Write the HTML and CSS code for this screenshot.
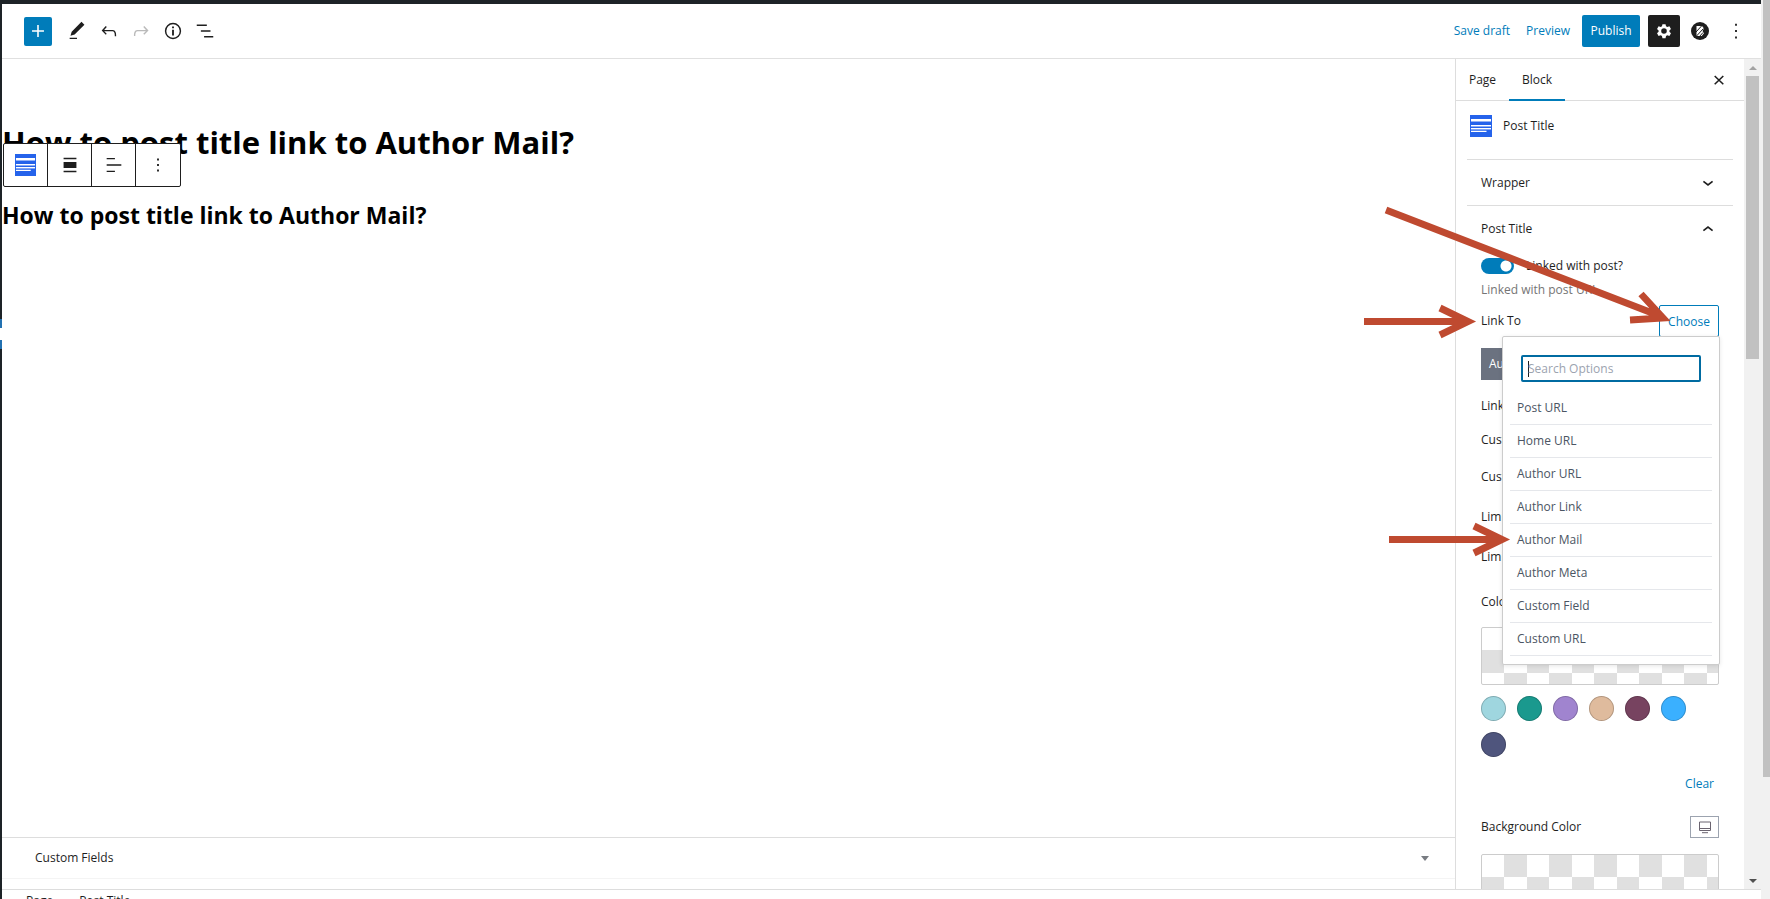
FILE: index.html
```
<!DOCTYPE html>
<html lang="en">
<head>
<meta charset="utf-8">
<title>Edit Page</title>
<link rel="stylesheet" href="styles.css">
</head>
<body>
<div class="screen">
  <div class="admin-menu"><span class="menu-current"></span></div>
  <div class="editor">
    <header class="toolbar">
      <div class="tools">
        <button class="tool insert" aria-label="Add block"><svg width="22" height="22" viewBox="0 0 24 24"><path d="M12 5.500v13M5.500 12h13" stroke="#fff" stroke-width="1.700"/></svg></button>
        <button class="tool" aria-label="Tools"><svg width="22" height="22" viewBox="0 0 24 24"><path d="M20.100 5.100L16.900 2 6.200 12.700l-1.300 4.400 4.500-1.300L20.100 5.100zM4 20.800h8v-1.500H4v1.500z" fill="#1e1e1e"/></svg></button>
        <button class="tool" aria-label="Undo"><svg width="22" height="22" viewBox="0 0 24 24"><path d="M18.300 11.700c-.6-.6-1.400-.9-2.300-.9H6.700l2.900-3.300-1.100-1-4.500 5L8.500 16l1-1-2.700-2.700H16c.5 0 .9.200 1.300.5 1 1 1 3.400 1 4.500v.3h1.500v-.2c0-1.500 0-4.300-1.500-5.700z" fill="#1e1e1e"/></svg></button>
        <button class="tool dim" aria-label="Redo"><svg width="22" height="22" viewBox="0 0 24 24"><path d="M15.600 6.500l-1.100 1 2.900 3.300H8c-.9 0-1.700.3-2.300.9-1.400 1.500-1.400 4.200-1.400 5.600v.2h1.500v-.3c0-1.100 0-3.500 1-4.500.3-.3.700-.5 1.300-.5h9.200L14.500 15l1.100 1.100 4.600-4.600-4.600-5z" fill="#1e1e1e"/></svg></button>
        <button class="tool" aria-label="Details"><svg width="22" height="22" viewBox="0 0 24 24"><circle cx="12" cy="12" r="8.100" fill="none" stroke="#1e1e1e" stroke-width="1.600"/><path d="M11 7h2v2h-2zM11 10.700h2V17h-2z" fill="#1e1e1e"/></svg></button>
        <button class="tool" aria-label="List view"><svg width="22" height="22" viewBox="0 0 24 24"><path d="M3 5h11v1.600H3zM7.500 11.300H18v1.500H7.500zM11 17.400h10V19H11z" fill="#1e1e1e"/></svg></button>
      </div>
      <div class="actions">
        <button class="text-link">Save draft</button>
        <button class="text-link preview">Preview</button>
        <button class="publish">Publish</button>
        <button class="settings" aria-label="Settings"><svg width="22" height="22" viewBox="0 0 24 24"><path fill="#fff" fill-rule="evenodd" d="M10.300 4.500h3.400l.5 2.300 1.400.8 2.300-.7 1.700 2.900-1.700 1.600v1.500l1.700 1.600-1.700 2.900-2.300-.7-1.400.8-.5 2.300h-3.400l-.5-2.300-1.400-.8-2.300.7-1.700-2.900 1.700-1.600v-1.500L4.400 9.800l1.700-2.900 2.300.7 1.400-.8zM12 9a3 3 0 100 6.100A3 3 0 0012 9z"/></svg></button>
        <button class="plugin" aria-label="Block library"><svg width="20" height="20" viewBox="0 0 20 20"><circle cx="10" cy="10" r="9" fill="#1e1e1e"/><path d="M6.500 5h5.500l2 2.500-1.500 2.500 1.500 2.300-2.300 2.700H6.500z" fill="#fff"/><path d="M6 11L12 4.500M6.500 15L13.500 7.500M9.500 15.500l3.500-4" stroke="#1e1e1e"/></svg></button>
        <button class="more" aria-label="Options"><svg width="22" height="22" viewBox="0 0 24 24"><path d="M11 4h2v2.200h-2zM11 11h2v2.200h-2zM11 18h2v2.200h-2z" fill="#1e1e1e"/></svg></button>
      </div>
    </header>

    <div class="work">
      <main class="content">
        <div class="canvas">
          <h1 class="page-title">How to post title link to Author Mail?</h1>
          <h2 class="block-title">How to post title link to Author Mail?</h2>
          <div class="block-tools">
            <button aria-label="Post Title"><svg width="21" height="22" viewBox="0 0 22 22" preserveAspectRatio="none"><path fill="#2563eb" d="M0 0h22v22H0z"/><path fill="#fff" d="M1 4h20v2.500H1zM1 10h20v1.300H1zM1 13h20v1H1zM1 15.700h15.500v1.300H1z"/><path fill="#9db9f7" d="M1 11.300h20v.7H1zM1 14h20v.7H1z"/></svg></button>
            <button aria-label="Align"><svg width="22" height="22" viewBox="0 0 24 24"><path d="M5 4h14v1.600H5zM5 8.700h14v6.600H5zM5 18.300h14v1.600H5z" fill="#1e1e1e"/></svg></button>
            <button aria-label="Text align"><svg width="22" height="22" viewBox="0 0 24 24"><path d="M4 4.300h9v1.500H4zM4 11.300h16v1.500H4zM4 18.200h9v1.500H4z" fill="#1e1e1e"/></svg></button>
            <button aria-label="Options"><svg width="22" height="22" viewBox="0 0 24 24"><path d="M11 5h2v2h-2zM11 11h2v2h-2zM11 17h2v2h-2z" fill="#1e1e1e"/></svg></button>
          </div>
        </div>
        <section class="metabox">
          <button class="metabox-head"><span>Custom Fields</span><span class="tri-down"></span></button>
        </section>
      </main>

      <aside class="sidebar">
        <div class="panel">
          <div class="tabs">
            <button class="tab">Page</button>
            <button class="tab active">Block</button>
            <button class="close" aria-label="Close settings"><svg width="22" height="22" viewBox="0 0 24 24"><path d="M7.300 7.600l9.400 9M16.700 7.600l-9.400 9" stroke="#1e1e1e" stroke-width="1.700"/></svg></button>
          </div>
          <div class="card">
            <svg width="22" height="22" viewBox="0 0 22 22"><path fill="#2563eb" d="M0 0h22v22H0z"/><path fill="#fff" d="M1 4h20v2.500H1zM1 10h20v1.300H1zM1 13h20v1H1zM1 15.700h15.500v1.300H1z"/><path fill="#9db9f7" d="M1 11.300h20v.7H1zM1 14h20v.7H1z"/></svg>
            <span>Post Title</span>
          </div>
          <button class="section"><span>Wrapper</span><svg width="22" height="22" viewBox="0 0 24 24"><path d="M7 10.300l5 3.900 5-3.900" fill="none" stroke="#1e1e1e" stroke-width="1.800"/></svg></button>
          <button class="section"><span>Post Title</span><svg width="22" height="22" viewBox="0 0 24 24"><path d="M7 13.700l5-3.900 5 3.900" fill="none" stroke="#1e1e1e" stroke-width="1.800"/></svg></button>

          <div class="fields">
            <label class="toggle-row"><input class="toggle" type="checkbox" checked><span>Linked with post?</span></label>
            <p class="help">Linked with post URL</p>
            <div class="link-row">
              <span>Link To</span>
              <div class="chooser">
                <button class="choose">Choose</button>
                <div class="menu">
                  <input class="search" type="text" placeholder="Search Options" aria-label="Search Options">
                  <ul class="options">
                    <li>Post URL</li>
                    <li>Home URL</li>
                    <li>Author URL</li>
                    <li>Author Link</li>
                    <li>Author Mail</li>
                    <li>Author Meta</li>
                    <li>Custom Field</li>
                    <li>Custom URL</li>
                  </ul>
                </div>
              </div>
            </div>
            <div class="chosen">Author Mail</div>
            <div class="row short">Link Target</div>
            <div class="row short">Custom Attributes</div>
            <div class="row">Custom Url</div>
            <div class="row">Limit By</div>
            <div class="row">Limit Count</div>
            <div class="row color-label">Color</div>
            <div class="checker"></div>
            <div class="swatches">
              <button class="swatch aqua" aria-label="Aqua"></button>
              <button class="swatch teal" aria-label="Teal"></button>
              <button class="swatch purple" aria-label="Purple"></button>
              <button class="swatch tan" aria-label="Tan"></button>
              <button class="swatch plum" aria-label="Plum"></button>
              <button class="swatch blue" aria-label="Blue"></button>
              <button class="swatch indigo" aria-label="Indigo"></button>
            </div>
            <button class="clear">Clear</button>
            <div class="bg-row">
              <span>Background Color</span>
              <button class="device" aria-label="Desktop"><svg width="14" height="13" viewBox="0 0 14 13"><path d="M1.500 1h11v8.500h-11zM1.500 7.500h11M4 11.700h6" fill="none" stroke="#6b6470"/></svg></button>
            </div>
            <div class="checker"></div>
          </div>
        </div>
        <div class="scrollbar">
          <span class="arrow-up"></span>
          <span class="thumb"></span>
          <span class="arrow-down"></span>
        </div>
      </aside>
    </div>
    <footer class="breadcrumb"><span>Page</span><span>→</span><span>Post Title</span></footer>
  </div>
  <div class="page-scroll"><span class="page-thumb"></span></div>
  <svg class="pointers" width="350" height="400" viewBox="1360 190 350 400" fill="none" stroke="#bf4a30" stroke-width="7">
    <path d="M1386 210L1660 316M1641 294L1663 318L1630 320"/>
    <path d="M1364 321.500H1468M1440 308L1468 321.500L1440 335"/>
    <path d="M1389 539.500H1502M1474 526L1502 539.500L1474 553"/>
  </svg>
</div>
</body>
</html>
```
FILE: styles.css
```
* { box-sizing: border-box; }
body {
  margin: 0;
  background: #fff;
  color: #1e1e1e;
  font: 12px/16px "Open Sans", "Noto Sans", sans-serif;
}
button {
  margin: 0;
  padding: 0;
  border: 0;
  background: none;
  color: inherit;
  font: inherit;
  cursor: pointer;
}
svg { display: block; flex: none; }

.screen {
  position: relative;
  display: flex;
  height: 100vh;
  overflow: hidden;
}
.admin-menu {
  width: 2px;
  padding-top: 319px;
  background: #1d2327;
}
.menu-current {
  display: block;
  height: 30px;
  background: linear-gradient(#2271b1 9px, #fff 9px 21px, #2271b1 21px);
}
.editor {
  flex: 1;
  min-width: 0;
  display: flex;
  flex-direction: column;
  border-top: 4px solid #1d2327;
}

.toolbar {
  flex: none;
  display: flex;
  align-items: center;
  justify-content: space-between;
  height: 55px;
  padding: 0 14px 0 22px;
  border-bottom: 1px solid #e0e0e0;
}
.tools { display: flex; gap: 4px; }
.tool {
  display: grid;
  place-items: center;
  width: 28px;
  height: 29px;
}
.insert { margin-right: 7px; background: #007cba; border-radius: 2px; }
.dim { opacity: .3; }
.actions { display: flex; align-items: center; }
.text-link { margin-right: 16px; color: #007cba; }
.text-link.preview { margin-right: 12px; }
.publish {
  width: 58px;
  height: 32px;
  border-radius: 2px;
  background: #007cba;
  color: #fff;
}
.settings {
  display: grid;
  place-items: center;
  width: 32px;
  height: 32px;
  margin: 0 10px 0 8px;
  border-radius: 2px;
  background: #1e1e1e;
}
.more { margin-left: 15px; }

.work { flex: 1; min-height: 0; display: flex; }
.content {
  flex: 1;
  min-width: 0;
  display: flex;
  flex-direction: column;
}
.canvas { position: relative; flex: 1; color: #000; }
.page-title {
  margin: 60px 0 0;
  font-size: 31px;
  line-height: 46px;
}
.block-title {
  margin: 32px 0 0;
  font-size: 23px;
  line-height: 36px;
}
.block-tools {
  position: absolute;
  left: 1px;
  top: 84px;
  display: flex;
  border: 1px solid #1e1e1e;
  border-radius: 2px;
  background: #fff;
}
.block-tools button {
  display: grid;
  place-items: center;
  width: 44px;
  height: 42px;
}
.block-tools button:first-child { width: 43px; }
.block-tools button:last-child { width: 45px; }
.block-tools button + button { border-left: 1px solid #1e1e1e; }
.metabox { height: 52px; border-top: 1px solid #ddd; }
.metabox-head {
  display: flex;
  align-items: center;
  justify-content: space-between;
  width: 100%;
  height: 41px;
  padding: 0 26px 0 33px;
  border-bottom: 1px solid #f4f4f4;
}
.tri-down {
  border: 4px solid transparent;
  border-top: 5px solid #787c82;
  border-bottom: 0;
}

.sidebar { flex: none; display: flex; width: 306px; border-left: 1px solid #ddd; }
.panel { flex: 1; min-width: 0; overflow: hidden; }
.tabs {
  display: flex;
  align-items: stretch;
  height: 42px;
  border-bottom: 1px solid #ddd;
}
.tab { flex: none; width: 53px; }
.tab.active {
  width: 56px;
  margin-bottom: -1px;
  border-top: 2px solid transparent;
  border-bottom: 2px solid #007cba;
}
.close { margin: 0 14px 0 auto; }
.card {
  display: flex;
  align-items: flex-start;
  gap: 11px;
  height: 58px;
  padding: 14px;
}
.card span { line-height: 22px; }
.section {
  display: flex;
  align-items: center;
  justify-content: space-between;
  width: calc(100% - 22px);
  height: 46px;
  margin: 0 11px;
  padding: 0 14px;
  border-top: 1px solid #ddd;
}
.fields { padding: 7px 25px 0; }
.toggle-row { display: flex; align-items: center; gap: 12px; height: 16px; }
.toggle {
  appearance: none;
  width: 33px;
  height: 16px;
  margin: 0;
  border-radius: 8px;
  background: radial-gradient(circle at 25px 8px, #fff 5px, #007cba 6px);
}
.help { margin: 8px 0 7px; color: #757575; }
.link-row {
  display: flex;
  justify-content: space-between;
  height: 43px;
  line-height: 32px;
}
.chooser { position: relative; }
.choose {
  width: 60px;
  height: 32px;
  border: 1px solid #007cba;
  border-radius: 2px;
  color: #007cba;
}
.menu {
  position: absolute;
  z-index: 1;
  right: -1px;
  top: 31px;
  width: 218px;
  padding: 18px 7px 8px;
  border: 1px solid #ccc;
  border-radius: 2px;
  background: #fff;
  box-shadow: 0 1px 4px rgba(0, 0, 0, .1);
}
.search {
  display: block;
  width: 180px;
  height: 27px;
  margin: 0 0 10px 11px;
  padding: 0 5px;
  border: 2px solid #006ba1;
  border-radius: 2px;
  background: linear-gradient(#1e1e1e, #1e1e1e) 5px 4px / 1px 16px no-repeat;
  font: inherit;
}
.search::placeholder { color: #9ca3af; }
.options {
  margin: 0;
  padding: 0;
  list-style: none;
  color: #4b5563;
}
.options li {
  height: 33px;
  padding-left: 7px;
  border-bottom: 1px solid #e5e7eb;
  line-height: 32px;
}
.chosen {
  width: 100px;
  height: 32px;
  margin-bottom: 9px;
  padding-left: 8px;
  background: #6b7280;
  color: #fff;
  line-height: 32px;
}
.row { height: 40px; line-height: 40px; }
.row.short { height: 34px; line-height: 34px; }
.row.color-label { height: 50px; line-height: 50px; }
.checker {
  height: 58px;
  border: 1px solid #ccc;
  border-radius: 2px;
  background-image:
    linear-gradient(45deg, #e0e0e0 25%, transparent 25%, transparent 75%, #e0e0e0 75%),
    linear-gradient(45deg, #e0e0e0 25%, transparent 25%, transparent 75%, #e0e0e0 75%);
  background-position: 0 0, 22px 22px;
  background-size: 45px 45px;
}
.swatches {
  display: flex;
  flex-wrap: wrap;
  gap: 11px;
  margin: 11px 0 18px;
}
.swatch {
  width: 25px;
  height: 25px;
  border-radius: 50%;
  box-shadow: inset 0 0 0 1px rgba(0, 0, 0, .2);
}
.aqua { background: #9fd6df; }
.teal { background: #1a998e; }
.purple { background: #a084cf; }
.tan { background: #dfbb9d; }
.plum { background: #774360; }
.blue { background: #3ab0ff; }
.indigo { background: #4f557d; }
.clear {
  display: block;
  margin-left: auto;
  padding: 0 5px;
  color: #007cba;
  line-height: 18px;
}
.bg-row {
  display: flex;
  align-items: center;
  justify-content: space-between;
  margin: 23px 0 16px;
}
.device {
  display: grid;
  place-items: center;
  width: 29px;
  height: 22px;
  border: 1px solid #9ca3af;
}

.scrollbar {
  display: flex;
  flex-direction: column;
  align-items: center;
  width: 17px;
  padding: 7px 0 6px;
  background: #f1f1f1;
}
.arrow-up {
  border: 4px solid transparent;
  border-bottom-color: #a3a3a3;
  border-top: 0;
}
.thumb { width: 13px; height: 283px; margin-top: 6px; background: #c1c1c1; }
.arrow-down {
  margin-top: auto;
  border: 4px solid transparent;
  border-top-color: #505050;
  border-bottom: 0;
}
.breadcrumb {
  flex: none;
  display: flex;
  gap: 7px;
  height: 10px;
  padding: 3px 24px 0;
  border-top: 1px solid #ddd;
  overflow: hidden;
}
.page-scroll { width: 9px; padding-left: 2px; background: #f1f1f1; }
.page-thumb { display: block; height: 777px; background: #c1c1c1; }
.pointers {
  position: absolute;
  z-index: 2;
  top: 190px;
  right: 60px;
  pointer-events: none;
}
```
